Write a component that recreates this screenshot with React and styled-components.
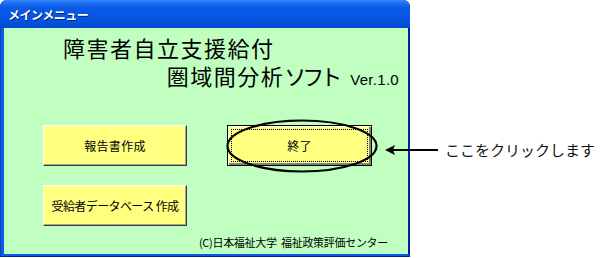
import React from "react";
import styled, { createGlobalStyle } from "styled-components";

const GlobalStyle = createGlobalStyle`
    html, body {
        margin: 0;
        padding: 0;
        background: #fff;
    }
    body {
        font-family: "Noto Sans CJK JP", "Noto Sans", sans-serif;
    }
`

const Page = styled.div`
    position: relative;
    width: 610px;
    height: 258px;
    overflow: hidden;
`
const Window = styled.div`
    width: 410px;
    height: 257px;
    display: flex;
    flex-direction: column;
    background: #0a5ae6;
    border-radius: 7px 7px 0 0;
    box-shadow: inset 1px 0 0 #0b3fc0, inset -1px 0 0 #0022a0, inset 0 -1px 0 #0022a0;
    box-sizing: border-box;
`
const TitleBar = styled.div`
    height: 28px;
    flex-shrink: 0;
    display: flex;
    align-items: center;
    padding-left: 8px;
    border-radius: 7px 7px 0 0;
    background: linear-gradient(to bottom, #3a8cff 0px, #1c6ef5 3px, #0a5ae6 8px, #0555e0 20px, #0348d0 28px);
    color: #fff;
    font-size: 12px;
    font-weight: bold;
    letter-spacing: -0.5px;
    text-shadow: 1px 1px 0 #0a1f7a;
`
const Content = styled.div`
    flex: 1;
    margin: 0 2px 3px 4px;
    background: #c0ffc0;
    display: flex;
    flex-direction: column;
    box-shadow: 1px 0 0 #0022a0;
`
const Heading = styled.div`
    height: 27px;
    font-size: 22px;
    letter-spacing: 1.5px;
    line-height: 27px;
    color: #000;
    white-space: nowrap;
    display: flex;
    align-items: baseline;
    margin: 6px 0 0 59px;
`
const SubHeading = styled(Heading)`
    justify-content: flex-end;
    margin: 1px 9px 0 0;
`
const Kana = styled.span`
    letter-spacing: -4px;
`
const Version = styled.span`
    font-family: "Liberation Sans", "Noto Sans", sans-serif;
    font-size: 15px;
    line-height: 1;
    letter-spacing: 0.3px;
    margin-left: 12px;
`
const ButtonGrid = styled.div`
    display: grid;
    grid-template-columns: 144px 145px;
    grid-auto-rows: 41px;
    column-gap: 40px;
    row-gap: 19px;
    margin: 36px 0 0 39px;
`
const Cell = styled.div`
    position: relative;
    display: flex;
`
const Button = styled.button`
    flex: 1;
    margin: 0;
    padding: 0;
    background: #ffff80;
    font-family: "Noto Sans CJK JP", sans-serif;
    font-size: 12px;
    letter-spacing: ${p => p.$tight ? "-0.6px" : "0.3px"};
    color: #000;
    border-top: 1px solid #fff;
    border-left: 1px solid #fff;
    border-right: 1px solid #404040;
    border-bottom: 1px solid #404040;
    box-shadow: inset -1px -1px 0 #a0a0a0;
    cursor: pointer;
`
const FocusButton = styled(Button)`
    border: 1px solid #000;
    box-shadow: inset 1px 1px 0 #fff, inset -2px -2px 0 #808080;
    position: relative;
    &::after {
        content: '';
        position: absolute;
        inset: 3px;
        border: 1px dotted #000;
    }
`
const Ellipse = styled.svg`
    position: absolute;
    left: -1px;
    top: -6px;
    pointer-events: none;
`
const Footer = styled.div`
    margin: 9px 20px 0 auto;
    font-size: 11px;
    line-height: 14px;
    letter-spacing: -0.3px;
    color: #000;
    white-space: pre;
`
const Note = styled.div`
    position: absolute;
    left: 384px;
    top: 139px;
    display: flex;
    align-items: center;
    gap: 7px;
`
const NoteText = styled.span`
    font-size: 15px;
    letter-spacing: 0;
    color: #111;
`

export default function App() {
    return (
        <>
            <GlobalStyle />
            <Page>
                <Window>
                    <TitleBar>メインメニュー</TitleBar>
                    <Content>
                        <Heading>障害者自立支援給付</Heading>
                        <SubHeading>
                            圏域間分析<Kana>ソフト</Kana><Version>Ver.1.0</Version>
                        </SubHeading>
                        <ButtonGrid>
                            <Cell><Button>報告書作成</Button></Cell>
                            <Cell>
                                <FocusButton>終了</FocusButton>
                                <Ellipse width="152" height="54" viewBox="0 0 152 54">
                                    <ellipse cx="76" cy="27" rx="74.5" ry="25.5" fill="none" stroke="#000" strokeWidth="2.2" />
                                </Ellipse>
                            </Cell>
                            <Cell><Button $tight>受給者データベース 作成</Button></Cell>
                        </ButtonGrid>
                        <Footer>(C)日本福祉大学  福祉政策評価センター</Footer>
                    </Content>
                </Window>
                <Note>
                    <svg width="54" height="20" viewBox="0 0 54 20">
                        <line x1="8" y1="10" x2="54" y2="10" stroke="#000" strokeWidth="2" />
                        <polygon points="1,10 11,5 9,10 11,15" fill="#000" />
                    </svg>
                    <NoteText>ここをクリックします</NoteText>
                </Note>
            </Page>
        </>
    )
}
